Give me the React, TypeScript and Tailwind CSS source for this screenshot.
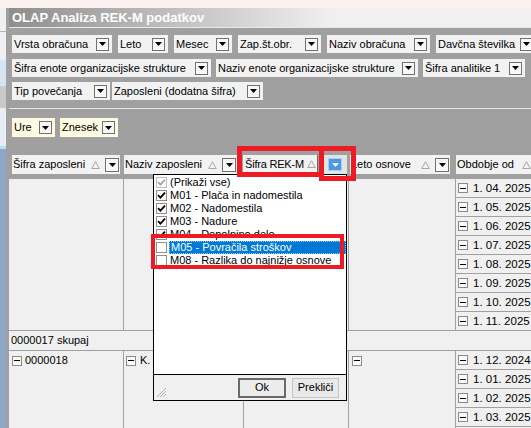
const Tri = () => (
  <svg width="9" height="8" viewBox="0 0 9 8" className="shrink-0">
    <path d="M4.5 0.8 L8.3 7.5 H0.7 Z" fill="none" stroke="#a8a8a8" strokeWidth="1" />
  </svg>
);

const DropSq = ({ big }: { big?: boolean }) => (
  <span
    className={`flex shrink-0 items-center justify-center border border-[#707070] bg-[#f8f8f8] ${
      big ? "h-[14px] w-[14px]" : "h-[13px] w-[13px]"
    }`}
  >
    <svg width="7" height="4" viewBox="0 0 7 4">
      <path d="M0 0H7L3.5 4Z" fill="#000" />
    </svg>
  </span>
);

const MinusBox = () => (
  <span className="flex h-[10px] w-[10px] shrink-0 items-center justify-center border border-[#8a8a8a] bg-[#fbfbfb]">
    <span className="h-px w-[6px] bg-black" />
  </span>
);

function Filter({ label, className, yellow }: { label: string; className: string; yellow?: boolean }) {
  return (
    <div
      className={`flex h-[18px] shrink-0 items-center justify-between pl-[2px] pr-[3px] ${
        yellow ? "bg-[#fdfbe2]" : "bg-[#f2f2f2]"
      } ${className}`}
    >
      <span className="whitespace-nowrap">{label}</span>
      <DropSq />
    </div>
  );
}

function Head({ label, className }: { label: string; className: string }) {
  return (
    <div className={`flex h-[19px] shrink-0 items-center bg-[#f2f2f2] pl-[1px] pr-[1px] ${className}`}>
      <span className="whitespace-nowrap">{label}</span>
      <span className="ml-auto flex items-center gap-[5px]">
        <Tri />
        <DropSq big />
      </span>
    </div>
  );
}

function Check({ on, dim }: { on?: boolean; dim?: boolean }) {
  return (
    <span
      className={`flex h-[11px] w-[11px] shrink-0 items-center justify-center border bg-white ${
        dim ? "border-[#bdbdbd]" : "border-[#8f8f8f]"
      }`}
    >
      {on && (
        <svg width="9" height="9" viewBox="0 0 9 9">
          <path d="M1 4.2 L3.4 6.6 L8 1.6" fill="none" stroke={dim ? "#a8a8a8" : "#000"} strokeWidth="1.8" />
        </svg>
      )}
    </span>
  );
}

function DateRow({ d }: { d?: string }) {
  return (
    <div className="flex h-[19px] shrink-0 items-center gap-[5px] border-b border-[#a0a0a0] pl-[2px] text-[11.5px]">
      {d && (
        <>
          <MinusBox />
          <span className="whitespace-nowrap">{d}</span>
        </>
      )}
    </div>
  );
}

const ITEMS: { t: string; on?: boolean; dim?: boolean; sel?: boolean }[] = [
  { t: "(Prikaži vse)", on: true, dim: true },
  { t: "M01 - Plača in nadomestila", on: true },
  { t: "M02 - Nadomestila", on: true },
  { t: "M03 - Nadure", on: true },
  { t: "M04 - Dopolnino delo", on: true },
  { t: "M05 - Povračila stroškov", sel: true },
  { t: "M08 - Razlika do najnižje osnove" },
];

function LeftStrip() {
  return (
    <div className="flex w-[9px] shrink-0">
      <div className="flex w-[6px] flex-col overflow-hidden">
        <div className="h-[23px] bg-[#f0f0f0]" />
        <div className="h-px bg-[#b4b4b4]" />
        <div className="h-[28px] bg-[#f0f0f0]" />
        <div className="h-[26px] bg-[#d6e4f3]" />
        <div className="h-[22px] bg-[#c9c9c9]" />
        <div className="h-[38px] bg-[#e6edf6]" />
        <div className="h-[3px] bg-[#b8e0ef]" />
        <div className="flex-1 bg-[#8ea7c7]" />
      </div>
      <div className="w-[3px] bg-[#a0a0a0]" />
    </div>
  );
}

export default function App() {
  return (
    <div className="relative h-[428px] w-[531px] overflow-hidden bg-[#a0a0a0] font-['Liberation_Sans',Arial,sans-serif] text-[11px] leading-[13px] text-black">
      <div className="h-[8px] bg-[#f9f0ef]" />
      <div className="flex h-[420px]">
        <LeftStrip />
        <div className="flex w-[522px] shrink-0 flex-col overflow-hidden bg-[#a0a0a0]">
          {/* title */}
          <div className="flex h-[19px] shrink-0 items-center bg-[linear-gradient(to_right,#8e8e8e,#f0f0f0_62%)] pl-[3px] text-[13px] font-bold text-white">
            OLAP Analiza REK-M podatkov
          </div>
          <div className="h-px shrink-0 bg-[#e9e9e9]" />

          {/* filter fields */}
          <div className="flex shrink-0 flex-col pl-[3px] pt-[7px]">
            <div className="flex gap-[6px]">
              <Filter label="Vrsta obračuna" className="w-[100px]" />
              <Filter label="Leto" className="w-[50px]" />
              <Filter label="Mesec" className="w-[58px]" />
              <Filter label="Zap.št.obr." className="w-[83px]" />
              <Filter label="Naziv obračuna" className="w-[103px]" />
              <Filter label="Davčna številka" className="w-[100px]" />
            </div>
            <div className="mt-[6px] flex gap-[5px]">
              <Filter label="Šifra enote organizacijske strukture" className="w-[199px]" />
              <Filter label="Naziv enote organizacijske strukture" className="w-[202px]" />
              <Filter label="Šifra analitike 1" className="w-[102px]" />
            </div>
            <div className="mt-[5px] flex gap-[2px]">
              <Filter label="Tip povečanja" className="w-[98px]" />
              <Filter label="Zaposleni (dodatna šifra)" className="w-[151px]" />
            </div>
          </div>
          <div className="mt-[8px] h-px shrink-0 bg-[#e6e6e6]" />

          {/* data fields */}
          <div className="mt-[9px] flex shrink-0 gap-[5px] pl-[3px]">
            <Filter label="Ure" className="h-[19px] w-[43px]" yellow />
            <Filter label="Znesek" className="h-[19px] w-[58px]" yellow />
          </div>

          {/* column headers */}
          <div className="mt-[18px] flex shrink-0 items-center pl-[3px]">
            <Head label="Šifra zaposleni" className="w-[108px]" />
            <Head label="Naziv zaposleni" className="ml-[4px] w-[113px]" />
            <div className="ml-[6px] flex h-[19px] w-[75px] shrink-0 items-center border-b border-r border-[#6a6a6a] bg-[#f2f2f2] pl-[2px] pr-[1px]">
              <span className="whitespace-nowrap tracking-[-0.2px]">Šifra REK-M</span>
              <span className="ml-auto">
                <Tri />
              </span>
            </div>
            <div className="ml-[5px] flex h-[19px] w-[24px] shrink-0 items-center justify-center bg-[#e4e4e4]">
              <span className="flex h-[13px] w-[14px] items-center justify-center border border-[#a9cff3] bg-[#4a98e6]">
                <svg width="7" height="4" viewBox="0 0 7 4">
                  <path d="M0 0H7L3.5 4Z" fill="#fff" />
                </svg>
              </span>
            </div>
            <Head label="Leto osnove" className="ml-[3px] w-[100px]" />
            <Head label="Obdobje od" className="ml-[6px] w-[95px]" />
          </div>

          {/* grid */}
          <div className="mt-[5px] flex shrink-0 flex-col bg-[#f0f0f0]">
            <div className="flex">
              <div className="w-[115px] shrink-0 border-b border-r border-[#a0a0a0]" />
              <div className="w-[120px] shrink-0 border-b border-r border-[#a0a0a0]" />
              <div className="w-[105px] shrink-0 border-b border-r border-[#a0a0a0]" />
              <div className="w-[107px] shrink-0 border-b border-r border-[#a0a0a0]" />
              <div className="flex flex-1 flex-col">
                {["1. 04. 2025", "1. 05. 2025", "1. 06. 2025", "1. 07. 2025", "1. 08. 2025", "1. 09. 2025", "1. 10. 2025", "1. 11. 2025"].map((d) => (
                  <DateRow key={d} d={d} />
                ))}
              </div>
            </div>
            <div className="flex h-[20px] items-center border-b border-[#a0a0a0] pl-[2px]">0000017 skupaj</div>
            <div className="flex">
              <div className="w-[115px] shrink-0 border-r border-[#a0a0a0]">
                <div className="flex h-[19px] items-center gap-[3px] pl-[3px]">
                  <MinusBox />
                  <span>0000018</span>
                </div>
              </div>
              <div className="w-[120px] shrink-0 border-r border-[#a0a0a0]">
                <div className="flex h-[19px] items-center gap-[4px] pl-[2px]">
                  <MinusBox />
                  <span className="whitespace-nowrap">K. Tomažič</span>
                </div>
              </div>
              <div className="w-[105px] shrink-0 border-r border-[#a0a0a0]" />
              <div className="w-[107px] shrink-0 border-r border-[#a0a0a0]">
                <div className="flex h-[19px] items-center pl-[3px]">
                  <MinusBox />
                </div>
              </div>
              <div className="flex flex-1 flex-col">
                {["1. 12. 2024", "1. 01. 2025", "1. 02. 2025", "1. 03. 2025"].map((d) => (
                  <DateRow key={d} d={d} />
                ))}
                <DateRow />
              </div>
            </div>
          </div>
        </div>
      </div>

      {/* filter popup */}
      <div className="absolute left-[153px] top-[174px] flex h-[227px] w-[194px] flex-col border border-black bg-white">
        <div className="flex flex-1 flex-col pt-px">
          {ITEMS.map((it) => (
            <div key={it.t} className="flex h-[13px] items-center pl-[2px]">
              <Check on={it.on} dim={it.dim} />
              <span
                className={`ml-[2px] flex h-[13px] flex-1 items-center whitespace-nowrap pl-px ${
                  it.sel ? "border border-dotted border-[#9ccaf5] bg-[#0078d7] text-white" : ""
                }`}
              >
                {it.t}
              </span>
            </div>
          ))}
        </div>
        <div className="relative flex h-[26px] shrink-0 items-center justify-end gap-[6px] border-t border-black bg-[#f0f0f0] pr-[7px]">
          <svg width="11" height="11" viewBox="0 0 11 11" className="absolute bottom-[2px] left-[2px]">
            <path d="M1 10 L10 1 M4 10 L10 4 M7 10 L10 7" stroke="#b0b0b0" strokeWidth="1" />
          </svg>
          <button className="flex h-[20px] w-[48px] items-center justify-center border-2 border-[#6a6a6a] bg-[#ececec]">Ok</button>
          <button className="flex h-[20px] w-[47px] items-center justify-center border border-[#c4c4c4] bg-[#e9e9e9]">Prekliči</button>
        </div>
      </div>

      {/* annotation frames */}
      <div className="absolute left-[237px] top-[146px] h-[31px] w-[87px] border-[5px] border-[#ed1c24]" />
      <div className="absolute left-[319px] top-[146px] h-[35px] w-[37px] border-[5px] border-[#ed1c24]" />
      <div className="absolute left-[151px] top-[234px] h-[35px] w-[193px] border-4 border-[#ed1c24]" />
    </div>
  );
}
